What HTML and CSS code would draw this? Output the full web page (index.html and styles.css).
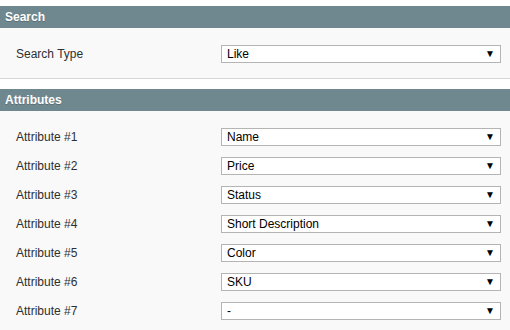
FILE: index.html
```html
<!DOCTYPE html>
<html lang="en">

<head>
    <meta charset="UTF-8">
    <meta name="viewport" content="width=device-width, initial-scale=1.0">
    <title>Search Settings</title>
    <link rel="stylesheet" href="styles.css">
</head>

<body>
    <div class="section">
        <h3 class="section-head">Search</h3>
        <div class="section-body">
            <div class="field-row">
                <label class="field-label">Search Type</label>
                <div class="select-wrap">
                    <select>
                        <option>Like</option>
                        <option>Fulltext</option>
                        <option>Combine</option>
                    </select>
                    <span class="arrow">&#9660;</span>
                </div>
            </div>
        </div>
    </div>

    <div class="section">
        <h3 class="section-head">Attributes</h3>
        <div class="section-body attributes">
            <div class="field-row">
                <label class="field-label">Attribute #1</label>
                <div class="select-wrap"><select><option>Name</option></select><span class="arrow">&#9660;</span></div>
            </div>
            <div class="field-row">
                <label class="field-label">Attribute #2</label>
                <div class="select-wrap"><select><option>Price</option></select><span class="arrow">&#9660;</span></div>
            </div>
            <div class="field-row">
                <label class="field-label">Attribute #3</label>
                <div class="select-wrap"><select><option>Status</option></select><span class="arrow">&#9660;</span></div>
            </div>
            <div class="field-row">
                <label class="field-label">Attribute #4</label>
                <div class="select-wrap"><select><option>Short Description</option></select><span class="arrow">&#9660;</span></div>
            </div>
            <div class="field-row">
                <label class="field-label">Attribute #5</label>
                <div class="select-wrap"><select><option>Color</option></select><span class="arrow">&#9660;</span></div>
            </div>
            <div class="field-row">
                <label class="field-label">Attribute #6</label>
                <div class="select-wrap"><select><option>SKU</option></select><span class="arrow">&#9660;</span></div>
            </div>
            <div class="field-row">
                <label class="field-label">Attribute #7</label>
                <div class="select-wrap"><select><option>-</option></select><span class="arrow">&#9660;</span></div>
            </div>
        </div>
    </div>
</body>

</html>
```

FILE: styles.css
```css
body {
    font-family: "Liberation Sans", Arial, sans-serif;
    font-size: 12px;
    color: #2f2f2f;
    margin: 0;
    padding-top: 6px;
    background-color: #fff;
}

.section {
    margin-bottom: 10px;
}

.section-head {
    margin: 0;
    height: 22px;
    line-height: 22px;
    padding: 0 5px;
    font-size: 12px;
    font-weight: bold;
    color: #fff;
    background-color: #6f8890;
    text-shadow: 0 1px 0 #5a6f75;
}

.section-body {
    background-color: #f9f9f9;
    border-bottom: 1px solid #d6d6d6;
    padding: 17px 9px 15px 16px;
}

.attributes {
    padding-bottom: 12px;
}

.field-row {
    display: flex;
    align-items: center;
    height: 18px;
}

.attributes .field-row + .field-row {
    margin-top: 11px;
}

.field-label {
    width: 205px;
}

.select-wrap {
    position: relative;
    width: 280px;
}

.select-wrap select {
    appearance: none;
    -webkit-appearance: none;
    display: block;
    width: 100%;
    height: 18px;
    margin: 0;
    padding: 0 20px 0 5px;
    font-family: "Liberation Sans", Arial, sans-serif;
    font-size: 12px;
    color: #000;
    background-color: #fff;
    border: 1px solid #b4b4b4;
    border-radius: 0;
}

/* dropdown arrow drawn over the select */
.arrow {
    position: absolute;
    right: 6px;
    top: 3px;
    font-size: 10px;
    line-height: 12px;
    color: #000;
    pointer-events: none;
}
```
